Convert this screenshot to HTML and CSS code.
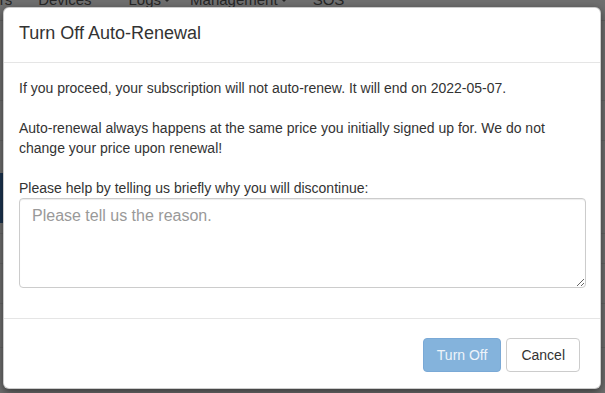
FILE: index.html
```html
<!DOCTYPE html>
<html lang="en">
<head>
<meta charset="utf-8">
<title>Turn Off Auto-Renewal</title>
<link rel="stylesheet" href="styles.css">
</head>
<body>
<div class="page">
  <nav class="navbar">
    <span class="nav-item users">Users</span>
    <span class="nav-item devices">Devices</span>
    <span class="nav-item logs">Logs<span class="caret"></span></span>
    <span class="nav-item mgmt">Management<span class="caret"></span></span>
    <span class="nav-item sos">SOS</span>
  </nav>
  <div class="content">
    <div class="row r1"></div>
    <div class="row r2"></div>
    <div class="row r3"><div class="side-block"></div></div>
    <div class="row r4"></div>
    <div class="row r5"></div>
    <div class="row r6"></div>
  </div>
</div>

<div class="modal" role="dialog">
  <div class="modal-header">
    <h4 class="modal-title">Turn Off Auto-Renewal</h4>
  </div>
  <div class="modal-body">
    <p class="para">If you proceed, your subscription will not auto-renew. It will end on 2022-05-07.</p>
    <p class="para">Auto-renewal always happens at the same price you initially signed up for. We do not change your price upon renewal!</p>
    <div class="form-group">
      <label class="label" for="reason">Please help by telling us briefly why you will discontinue:</label>
      <textarea id="reason" class="form-control" placeholder="Please tell us the reason."></textarea>
    </div>
  </div>
  <div class="modal-footer">
    <button class="btn btn-primary" disabled>Turn Off</button>
    <button class="btn btn-default">Cancel</button>
  </div>
</div>
</body>
</html>
```

FILE: styles.css
```css
html, body {
  margin: 0;
  padding: 0;
}

body {
  width: 605px;
  height: 393px;
  overflow: hidden;
  background: #6f6f6f;
  font-family: "Liberation Sans", Arial, sans-serif;
  color: #333;
}

.page {
  display: flex;
  flex-direction: column;
}

.navbar {
  display: flex;
  align-items: baseline;
  height: 30px;
  margin-top: -9px;
  border-bottom: 1px solid #626262;
  box-sizing: border-box;
  font-size: 15px;
  line-height: 18px;
  color: #262626;
  white-space: nowrap;
}

.nav-item {
  display: inline-flex;
  align-items: center;
  flex: none;
}

.users { margin-left: -27px; }
.devices { margin-left: 26px; }
.logs { margin-left: 37px; }
.mgmt { margin-left: 19px; }
.sos { margin-left: 25px; }

.caret {
  display: inline-block;
  width: 0;
  height: 0;
  margin-left: 2px;
  border-top: 4px solid #262626;
  border-left: 4px solid transparent;
  border-right: 4px solid transparent;
}

.content {
  display: flex;
  flex-direction: column;
}

.row {
  border-bottom: 1px solid #656565;
  box-sizing: border-box;
}

.r1 { height: 80px; }
.r2 { height: 40px; }
.r3 { height: 93px; padding-top: 32px; }
.r4 { height: 30px; }
.r5 { height: 40px; }
.r6 { height: 44px; }

.side-block {
  width: 3px;
  height: 50px;
  background: #1c3550;
}

/* Modal overlay */
.modal {
  position: absolute;
  top: 7px;
  left: 3px;
  width: 598px;
  box-sizing: border-box;
  background: #fff;
  border: 1px solid rgba(0, 0, 0, 0.2);
  border-radius: 6px;
  box-shadow: 0 3px 9px rgba(0, 0, 0, 0.5);
  display: flex;
  flex-direction: column;
}

.modal-header {
  padding: 12px 15px 16px;
  border-bottom: 1px solid #e5e5e5;
}

.modal-title {
  margin: 0;
  font-size: 18px;
  font-weight: normal;
  line-height: 26px;
  color: #333;
}

.modal-body {
  padding: 15px 14px 15px 15px;
  font-size: 14px;
  line-height: 20px;
}

.para {
  margin: 0 0 20px;
}

.form-group {
  display: flex;
  flex-direction: column;
  margin-bottom: 15px;
}

.label {
  display: block;
  margin: 0;
}

.form-control {
  display: block;
  width: 100%;
  height: 90px;
  box-sizing: border-box;
  padding: 6px 12px;
  margin: 0;
  font-family: "Liberation Sans", Arial, sans-serif;
  font-size: 16px;
  line-height: 21px;
  color: #555;
  background: #fff;
  border: 1px solid #ccc;
  border-radius: 4px;
  box-shadow: inset 0 1px 1px rgba(0, 0, 0, 0.075);
  resize: vertical;
}

.form-control::placeholder {
  color: #999;
}

.modal-footer {
  display: flex;
  justify-content: flex-end;
  gap: 5px;
  padding: 19px 20px 16px;
  border-top: 1px solid #e5e5e5;
}

.btn {
  height: 34px;
  padding: 6px 13px;
  font-family: "Liberation Sans", Arial, sans-serif;
  font-size: 14px;
  line-height: 20px;
  border: 1px solid transparent;
  border-radius: 4px;
  cursor: pointer;
}

.btn-primary {
  background: #84b3dc;
  border-color: #7aa9d6;
  color: #eef4fa;
  cursor: not-allowed;
}

.btn-default {
  padding: 6px 14px;
  background: #fff;
  border-color: #ccc;
  color: #333;
}
```
